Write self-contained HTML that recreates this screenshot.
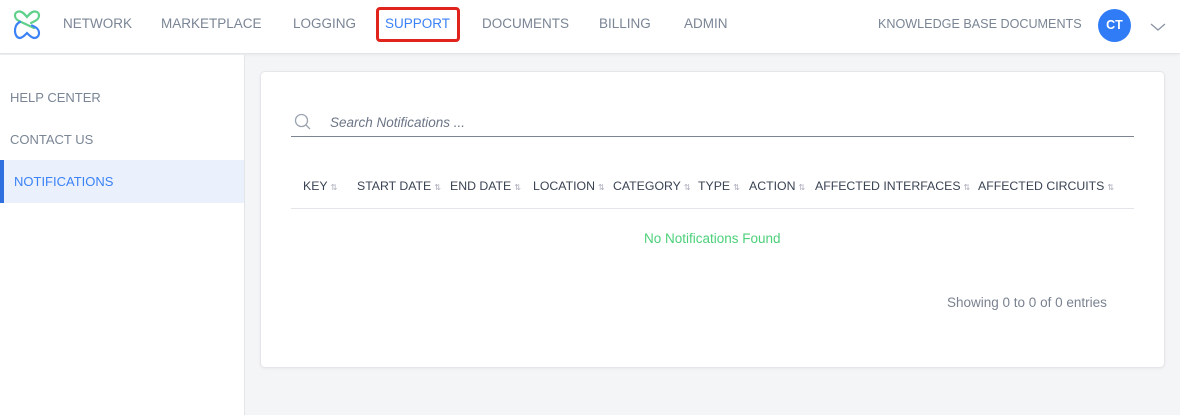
<!DOCTYPE html>
<html><head><style>
*{margin:0;padding:0;box-sizing:border-box}
body{width:1180px;height:415px;background:#f4f5f7;font-family:"Liberation Sans",sans-serif;position:relative;overflow:hidden}
.a{position:absolute;white-space:nowrap}
.hdr{position:absolute;left:0;top:0;width:1180px;height:54px;background:#fff;border-bottom:1px solid #e3e5e8;box-shadow:0 1px 3px rgba(0,0,0,.06)}
.nav{font-size:13.5px;color:#7a8595;top:16px}
.side{position:absolute;left:0;top:55px;width:245px;height:360px;background:#fff;border-right:1px solid #e3e5e8}
.sl{font-size:13px;color:#7a8595}
.card{position:absolute;left:260px;top:71px;width:905px;height:297px;background:#fff;border:1px solid #e4e6ea;border-radius:5px;box-shadow:0 1px 3px rgba(0,0,0,.05)}
.th{font-size:12.3px;color:#3a4354;top:179px}
.th i{font-style:normal;font-size:8px;color:#aab;margin-left:3px}
</style></head><body>
<div class="hdr"></div>
<svg class="a" style="left:10px;top:9px" width="34" height="32" viewBox="0 0 34 32" fill="none" stroke-width="2.2" stroke-linecap="round">
<path d="M24 19 L9 12 C3 9 4 2 10 2.5 C13 3 15 5.5 17 8 C19 5.5 21 3 24 2.5 C30 2 31 9 25 12 L21 14" stroke="#5fd08a"/>
<path d="M10 13 L9 13.5 C3 17 4 29 10 29 C13 28.5 15 26 17 24 C19 26 21 28.5 24 29 C30 29 31 21 25 18 L22 16.5" stroke="#3b82f6"/>
</svg>
<span class="a nav" style="left:63px">NETWORK</span>
<span class="a nav" style="left:161px">MARKETPLACE</span>
<span class="a nav" style="left:293px">LOGGING</span>
<div class="a" style="left:376px;top:7px;width:84px;height:35px;border:3px solid #e0241b;border-radius:4px"></div>
<span class="a nav" style="left:385px;color:#3b82f6">SUPPORT</span>
<span class="a nav" style="left:482px">DOCUMENTS</span>
<span class="a nav" style="left:599px">BILLING</span>
<span class="a nav" style="left:684px">ADMIN</span>
<span class="a nav" style="left:878px;font-size:12.6px;top:17px">KNOWLEDGE BASE DOCUMENTS</span>
<div class="a" style="left:1098px;top:9px;width:33px;height:33px;border-radius:50%;background:#2f7cf6;color:#fff;font-weight:bold;font-size:12.5px;text-align:center;line-height:33px">CT</div>
<svg class="a" style="left:1150px;top:22px" width="16" height="10"><path d="M1 2 L8 8 L15 2" stroke="#8a94a3" stroke-width="1.3" fill="none"/></svg>

<div class="side"></div>
<span class="a sl" style="left:10px;top:90px">HELP CENTER</span>
<span class="a sl" style="left:10px;top:132px">CONTACT US</span>
<div class="a" style="left:0;top:160px;width:244px;height:43px;background:#eaf1fd;border-left:4px solid #2f6fe0"></div>
<span class="a sl" style="left:14px;top:174px;color:#3b82f6">NOTIFICATIONS</span>

<div class="card"></div>
<svg class="a" style="left:294px;top:113px" width="18" height="18" fill="none" stroke="#9aa3ae" stroke-width="1.3"><circle cx="7.5" cy="7.5" r="6"/><path d="M12 12 L16 16"/></svg>
<span class="a" style="left:330px;top:115px;font-size:13.5px;font-style:italic;color:#6b7585">Search Notifications ...</span>
<div class="a" style="left:291px;top:136px;width:843px;height:1px;background:#7d8591"></div>
<span class="a th" style="left:303px">KEY<i>⇅</i></span>
<span class="a th" style="left:357px">START DATE<i>⇅</i></span>
<span class="a th" style="left:450px">END DATE<i>⇅</i></span>
<span class="a th" style="left:533px">LOCATION<i>⇅</i></span>
<span class="a th" style="left:613px">CATEGORY<i>⇅</i></span>
<span class="a th" style="left:698px">TYPE<i>⇅</i></span>
<span class="a th" style="left:749px">ACTION<i>⇅</i></span>
<span class="a th" style="left:815px">AFFECTED INTERFACES<i>⇅</i></span>
<span class="a th" style="left:978px">AFFECTED CIRCUITS<i>⇅</i></span>
<div class="a" style="left:291px;top:208px;width:843px;height:1px;background:#e3e5e8"></div>
<span class="a" style="left:644px;top:231px;font-size:13.5px;color:#4cd07a">No Notifications Found</span>
<span class="a" style="left:947px;top:295px;font-size:13.5px;color:#7a8290">Showing 0 to 0 of 0 entries</span>
</body></html>
